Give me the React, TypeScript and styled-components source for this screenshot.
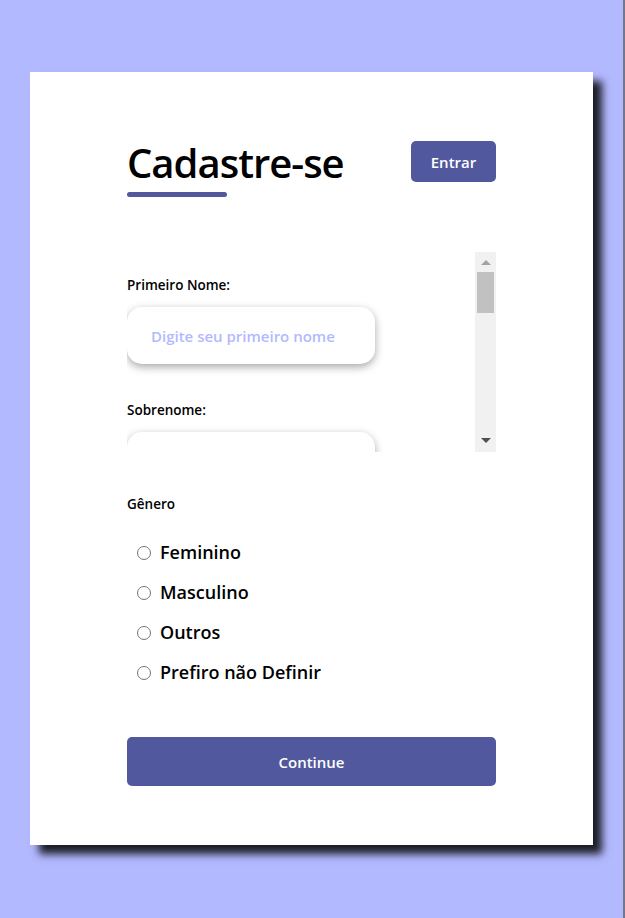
import React from "react";
import styled, { createGlobalStyle } from "styled-components";

const Global = createGlobalStyle`
  html, body { margin: 0; padding: 0; }
  body {
    background: #b3b9ff;
    font-family: "Open Sans", "Liberation Sans", sans-serif;
    color: #000;
  }
  * { box-sizing: border-box; }
`;

const Page = styled.div`
  min-height: 100vh;
  display: flex;
  align-items: flex-start;
  justify-content: center;
  padding-top: 72px;
  border-right: 2px solid #75768a;
`;

const Card = styled.div`
  width: 563px;
  height: 773px;
  background: #fff;
  box-shadow: 9px 9px 8px rgba(0, 0, 0, 0.85);
  padding: 69px 97px 0 97px;
  display: flex;
  flex-direction: column;
`;

const Header = styled.div`
  display: flex;
  justify-content: space-between;
  align-items: flex-start;
`;

const TitleBlock = styled.div`
  display: flex;
  flex-direction: column;
`;

const Title = styled.h1`
  margin: 0;
  font-size: 40px;
  line-height: 44px;
  font-weight: 600;
  letter-spacing: -1px;
`;

const Underline = styled.div`
  width: 100px;
  height: 5px;
  border-radius: 3px;
  background: #52589e;
  margin-top: 7px;
`;

const SmallButton = styled.button`
  width: 85px;
  height: 41px;
  border: none;
  border-radius: 5px;
  background: #52589e;
  color: #fff;
  font-family: inherit;
  font-size: 15px;
  font-weight: 600;
  cursor: pointer;
`;

const ScrollArea = styled.div`
  margin-top: 55px;
  height: 200px;
  display: flex;
`;

const ScrollContent = styled.div`
  flex: 1;
  overflow-y: scroll;
  padding-top: 25px;
  scrollbar-width: none;
  &::-webkit-scrollbar {
    display: none;
  }
`;

const Track = styled.div`
  width: 21px;
  background: #f1f1f1;
  display: flex;
  flex-direction: column;
`;

const ArrowButton = styled.div`
  height: 20px;
  display: flex;
  align-items: center;
  justify-content: center;
`;

const Arrow = styled.span<{ $dir: "up" | "down"; $color: string }>`
  width: 0;
  height: 0;
  border-left: 5px solid transparent;
  border-right: 5px solid transparent;
  ${(p) =>
    p.$dir === "up"
      ? `border-bottom: 5px solid ${p.$color}; margin-top: 1px;`
      : `border-top: 5px solid ${p.$color}; margin-top: -3px;`}
`;

const ThumbRail = styled.div`
  flex: 1;
  padding: 0 2px;
`;

const Thumb = styled.div`
  height: 41px;
  background: #c1c1c1;
`;

const Field = styled.div`
  display: flex;
  flex-direction: column;
  margin-bottom: 38px;
`;

const Label = styled.label`
  font-size: 13.5px;
  line-height: 16px;
  font-weight: 600;
  margin-bottom: 14px;
`;

const Input = styled.input`
  width: 248px;
  height: 57px;
  flex-shrink: 0;
  border: none;
  border-radius: 15px;
  background: #fff;
  box-shadow: 0 3px 8px rgba(0, 0, 0, 0.35);
  padding: 0 24px;
  font-family: inherit;
  font-size: 15px;
  font-weight: 600;
  outline: none;
  &::placeholder {
    color: #b3b9ff;
  }
`;

const Group = styled.div`
  margin-top: 44px;
  display: flex;
  flex-direction: column;
`;

const GroupTitle = styled.div`
  font-size: 13.5px;
  line-height: 16px;
  font-weight: 600;
  margin-bottom: 20px;
`;

const Option = styled.label`
  display: flex;
  align-items: center;
  height: 40px;
  font-size: 18px;
  font-weight: 600;
  padding-left: 5px;
`;

const Radio = styled.input`
  width: 14px;
  height: 14px;
  margin: 2px 9px 0 5px;
`;

const MainButton = styled.button`
  margin-top: 45px;
  width: 100%;
  height: 49px;
  border: none;
  border-radius: 5px;
  background: #52589e;
  color: #fff;
  font-family: inherit;
  font-size: 15px;
  font-weight: 600;
  cursor: pointer;
`;

const fields = [
  { label: "Primeiro Nome:", placeholder: "Digite seu primeiro nome" },
  { label: "Sobrenome:", placeholder: "Digite seu sobrenome" },
  { label: "E-mail:", placeholder: "Digite seu e-mail" },
  { label: "Celular:", placeholder: "(xx) xxxx-xxxx" },
  { label: "Senha:", placeholder: "Digite sua senha" },
  { label: "Confirme sua Senha:", placeholder: "Digite sua senha novamente" },
];

const options = ["Feminino", "Masculino", "Outros", "Prefiro não Definir"];

export default function App() {
  return (
    <>
      <Global />
      <Page>
        <Card>
          <Header>
            <TitleBlock>
              <Title>Cadastre-se</Title>
              <Underline />
            </TitleBlock>
            <SmallButton>Entrar</SmallButton>
          </Header>
          <ScrollArea>
            <ScrollContent>
              {fields.map((f) => (
                <Field key={f.label}>
                  <Label>{f.label}</Label>
                  <Input placeholder={f.placeholder} />
                </Field>
              ))}
            </ScrollContent>
            <Track aria-hidden>
              <ArrowButton>
                <Arrow $dir="up" $color="#a3a3a3" />
              </ArrowButton>
              <ThumbRail>
                <Thumb />
              </ThumbRail>
              <ArrowButton>
                <Arrow $dir="down" $color="#505050" />
              </ArrowButton>
            </Track>
          </ScrollArea>
          <Group>
            <GroupTitle>Gênero</GroupTitle>
            {options.map((o) => (
              <Option key={o}>
                <Radio type="radio" name="gender" />
                {o}
              </Option>
            ))}
          </Group>
          <MainButton>Continue</MainButton>
        </Card>
      </Page>
    </>
  );
}
